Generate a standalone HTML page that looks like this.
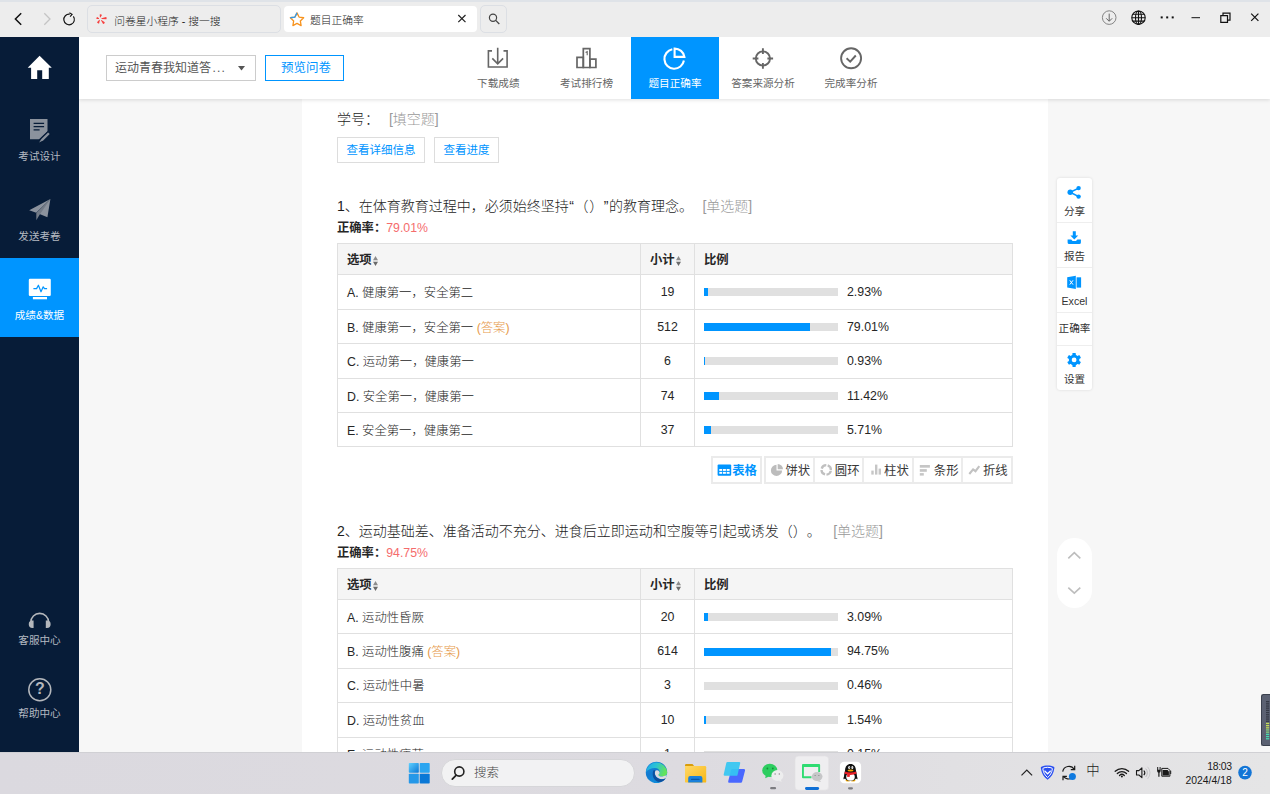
<!DOCTYPE html>
<html lang="zh-CN">
<head>
<meta charset="utf-8">
<title>题目正确率</title>
<style>
*{box-sizing:border-box;margin:0;padding:0}
html,body{width:1270px;height:794px;overflow:hidden;background:#f7f7f7}
body{position:relative;font-weight:300;text-spacing-trim:space-all;font-family:"Liberation Sans","Noto Sans CJK SC",sans-serif;font-size:12px;color:#262626}
.abs{position:absolute}
svg{display:block;overflow:visible}
/* ---------- browser chrome ---------- */
#chrome{position:absolute;left:0;top:0;width:1270px;height:37px;background:#ededed}
#chrome .topline{position:absolute;left:0;top:0;width:100%;height:2px;background:#dfe3e8}
.tab{position:absolute;top:5px;height:28px;border-radius:5px;font-size:10.75px;color:#222;line-height:30px;white-space:nowrap}
.tab1{left:87px;width:194px;border:1px solid #dcdfe4;background:#ededed}
.tab2{left:284px;top:6px;width:192.500px;height:26px;line-height:28.500px;background:#fff;border-radius:4px}
.tab3{left:480px;width:27px;border:1px solid #dcdfe4;background:#ededed}
/* ---------- sidebar ---------- */
#side{position:absolute;left:0;top:37px;width:79px;height:715px;background:#071c38}
#side .it{position:absolute;left:0;width:79px;text-align:center;font-size:10.6px;font-weight:400;color:#b4b9c1;white-space:nowrap}
#side .act{position:absolute;left:0;top:221px;width:79px;height:79px;background:#0095ff}
/* ---------- header ---------- */
#hdr{position:absolute;left:79px;top:37px;width:1191px;height:62px;background:#fff;box-shadow:0 1px 4px rgba(0,0,0,.13)}
.sel{position:absolute;left:27px;top:18px;width:150px;font-weight:400;height:26px;border:1px solid #ccc;background:#fff;font-size:12px;color:#555;line-height:24px;padding-left:8px;white-space:nowrap}
.pbtn{position:absolute;left:186px;top:18px;width:79px;font-weight:400;height:26px;border:1px solid #0095ff;background:#fff;font-size:12.5px;color:#0095ff;line-height:24px;text-align:center;padding-left:3px;white-space:nowrap}
.nav{position:absolute;top:0;width:88px;height:62px;text-align:center;font-size:10.6px;font-weight:400;color:#666;white-space:nowrap}
.nav.on{background:#0095ff;color:#fff}
.nav span{position:absolute;left:0;width:100%;top:38px;line-height:16px}
.nav svg{position:absolute;left:32px;top:9px}
/* ---------- main ---------- */
#panel{position:absolute;left:302px;top:99px;width:746px;height:653px;background:#fff}
.q{position:absolute;left:337px;font-size:14px;color:#1c1c1c;white-space:nowrap;line-height:20px}
.q i{font-style:normal;color:#999}
.rate{position:absolute;left:337px;font-size:12.3px;font-weight:bold;color:#262626;white-space:nowrap;line-height:16px}
.rate b{font-weight:300;color:#f56c6c}
.lbtn{position:absolute;top:137px;height:26px;font-weight:400;border:1px solid #ddd;background:#fff;color:#0095ff;font-size:11.5px;line-height:25.500px;text-align:center;white-space:nowrap}
table.t{position:absolute;left:337px;width:676px;border-collapse:collapse;font-size:12.35px;color:#262626;table-layout:fixed}
table.t td,table.t th{border:1px solid #e0e0e0;height:34.4px;padding:0 0 0 9px;text-align:left;white-space:nowrap;vertical-align:middle}
table.t th{background:#f5f5f5;height:31px;font-weight:bold}
table.t td.c{text-align:center;padding:0}
table.t tr.h35 td{height:35px}
table.t tr.h34 td{height:34px}
table.t em{font-style:normal;color:#e6994a}
.bar{display:inline-block;vertical-align:middle;width:134px;height:8px;background:#e0e0e0;position:relative;margin-right:9px;top:-0.300px}
.bar u{position:absolute;left:0;top:0;height:8px;background:#0095ff;display:block}
.sort{display:inline-block;width:5px;height:10px;margin-left:1px;vertical-align:-1.5px}
/* chart type buttons */
.ctg{position:absolute;top:456px;height:28px;border:2px solid #ebebeb;background:#fff}
.ct{position:absolute;top:0;height:24px;font-size:12.35px;color:#383838;font-weight:400;line-height:26px;white-space:nowrap}
.ct.on{color:#0095ff;font-weight:bold}
.ctsep{position:absolute;top:0;width:1.500px;height:24px;background:#ececec}
/* right tools */
#tools{position:absolute;left:1057px;top:178px;width:35px;height:212px;background:#fff;border-radius:3px;box-shadow:0 0 3px rgba(0,0,0,.12)}
#tools .tl{position:absolute;left:0;width:35px;text-align:center;font-size:10.6px;font-weight:400;color:#333;white-space:nowrap;line-height:14px}
#tools .ln{position:absolute;left:0;width:35px;height:1px;background:#eee}
#updn{position:absolute;left:1057px;top:538px;width:35px;height:70px;border-radius:18px;background:#fff}
/* ---------- taskbar ---------- */
#task{position:absolute;left:0;top:752px;width:1270px;height:42px;background:linear-gradient(90deg,#dbd9df 0%,#dddbe0 55%,#e1e0e3 75%,#e5e5e6 100%);border-top:1px solid #d0d0d4}
#task .search{position:absolute;left:441px;top:6px;width:194px;height:28px;border-radius:14px;background:#f2f2f3;border:1px solid #d6d6d9;font-size:12.5px;color:#444;line-height:26px;padding-left:32px}
#task .time{position:absolute;right:38.300px;top:6.600px;font-size:10.400px;line-height:14.300px;text-align:right;color:#1a1a1a}
</style>
</head>
<body>

<!-- MAIN PANEL -->
<div id="panel"></div>

<div class="q" style="top:109px">学号： <i style="margin-left:6px">[填空题]</i></div>
<div class="lbtn" style="left:337px;width:88px">查看详细信息</div>
<div class="lbtn" style="left:434px;width:65px">查看进度</div>

<div class="q" style="top:195.500px">1、在体育教育过程中，必须始终坚持<span style="letter-spacing:.600px;margin-left:.500px">“（）”</span>的教育理念。 <i style="margin-left:5.500px">[单选题]</i></div>
<div class="rate" style="top:220px">正确率：<b>79.01%</b></div>
<table class="t" style="top:243px">
<colgroup><col style="width:303px"><col style="width:54px"><col></colgroup>
<tr><th>选项<svg class="sort" viewBox="0 0 5 10"><path d="M0 4.200L2.500 0 5 4.200z" fill="#8c8c8c"/><path d="M0 5.800L2.500 10 5 5.800z" fill="#6a6a6a"/></svg></th><th>小计<svg class="sort" viewBox="0 0 5 10"><path d="M0 4.200L2.500 0 5 4.200z" fill="#8c8c8c"/><path d="M0 5.800L2.500 10 5 5.800z" fill="#6a6a6a"/></svg></th><th>比例</th></tr>
<tr class="h35"><td>A. 健康第一，安全第二</td><td class="c">19</td><td><span class="bar"><u style="width:4px"></u></span>2.93%</td></tr>
<tr class="h34"><td>B. 健康第一，安全第一 <em>(答案)</em></td><td class="c">512</td><td><span class="bar"><u style="width:106px"></u></span>79.01%</td></tr>
<tr class="h35"><td>C. 运动第一，健康第一</td><td class="c">6</td><td><span class="bar"><u style="width:1px"></u></span>0.93%</td></tr>
<tr class="h34"><td>D. 安全第一，健康第一</td><td class="c">74</td><td><span class="bar"><u style="width:15px"></u></span>11.42%</td></tr>
<tr class="h34"><td>E. 安全第一，健康第二</td><td class="c">37</td><td><span class="bar"><u style="width:7px"></u></span>5.71%</td></tr>
</table>

<div class="ctg" style="left:711px;width:51px"><div class="ct on" style="left:19.200px">表格</div></div>
<div class="ctg" style="left:764px;width:249px">
  <div class="ct" style="left:19.400px">饼状</div>
  <div class="ct" style="left:68.800px">圆环</div>
  <div class="ct" style="left:118.100px">柱状</div>
  <div class="ct" style="left:167.800px">条形</div>
  <div class="ct" style="left:217px">折线</div>
  <div class="ctsep" style="left:47.300px"></div><div class="ctsep" style="left:96.300px"></div><div class="ctsep" style="left:146.100px"></div><div class="ctsep" style="left:195.300px"></div>
</div>
<svg class="abs" style="left:705px;top:450px" width="320" height="40" viewBox="705 450 320 40" fill="none">
  <!-- table icon -->
  <rect x="717.600" y="464.500" width="13.600" height="11.300" rx="1" fill="#0095ff"/>
  <g fill="#fff"><rect x="719.300" y="469" width="2.900" height="1.900"/><rect x="723" y="469" width="2.900" height="1.900"/><rect x="726.700" y="469" width="2.900" height="1.900"/><rect x="719.300" y="471.900" width="2.900" height="1.900"/><rect x="723" y="471.900" width="2.900" height="1.900"/><rect x="726.700" y="471.900" width="2.900" height="1.900"/></g>
  <!-- pie -->
  <path d="M776.500 464.800A5.600 5.600 0 1 0 782.100 470.400H776.500z" fill="#bcbcbc"/>
  <path d="M777.700 463.900A5.300 5.300 0 0 1 783 469.200H777.700z" fill="#bcbcbc"/>
  <!-- ring -->
  <circle cx="826.200" cy="469.900" r="4.700" stroke="#c0c0c0" stroke-width="2.300" stroke-dasharray="5.900 1.480" transform="rotate(12 826.200 469.900)"/>
  <!-- bars -->
  <rect x="871.300" y="470.600" width="2.400" height="4" fill="#c6c6c6"/><rect x="875" y="464.600" width="2.400" height="10" fill="#c6c6c6"/><rect x="878.600" y="468.600" width="2.400" height="6" fill="#c6c6c6"/>
  <!-- hbars -->
  <rect x="919.800" y="465" width="10.100" height="2.700" fill="#c6c6c6"/><rect x="919.800" y="469.100" width="7" height="2.700" fill="#c6c6c6"/><rect x="919.800" y="473.100" width="4" height="2.500" fill="#c6c6c6"/>
  <!-- line -->
  <path d="M969.300 474l3.800-4.600 2.400 1.800 3.800-5" stroke="#c2c2c2" stroke-width="2.100"/>
</svg>

<div class="q" style="top:520.500px">2、运动基础差、准备活动不充分、进食后立即运动和空腹等引起或诱发（）。 <i style="margin-left:8.500px">[单选题]</i></div>
<div class="rate" style="top:545px">正确率：<b>94.75%</b></div>
<table class="t" style="top:568px">
<colgroup><col style="width:303px"><col style="width:54px"><col></colgroup>
<tr><th>选项<svg class="sort" viewBox="0 0 5 10"><path d="M0 4.200L2.500 0 5 4.200z" fill="#8c8c8c"/><path d="M0 5.800L2.500 10 5 5.800z" fill="#6a6a6a"/></svg></th><th>小计<svg class="sort" viewBox="0 0 5 10"><path d="M0 4.200L2.500 0 5 4.200z" fill="#8c8c8c"/><path d="M0 5.800L2.500 10 5 5.800z" fill="#6a6a6a"/></svg></th><th>比例</th></tr>
<tr><td>A. 运动性昏厥</td><td class="c">20</td><td><span class="bar"><u style="width:4px"></u></span>3.09%</td></tr>
<tr><td>B. 运动性腹痛 <em>(答案)</em></td><td class="c">614</td><td><span class="bar"><u style="width:127px"></u></span>94.75%</td></tr>
<tr><td>C. 运动性中暑</td><td class="c">3</td><td><span class="bar"><u style="width:0px"></u></span>0.46%</td></tr>
<tr><td>D. 运动性贫血</td><td class="c">10</td><td><span class="bar"><u style="width:2px"></u></span>1.54%</td></tr>
<tr><td>E. 运动性疲劳</td><td class="c">1</td><td><span class="bar"><u style="width:0px"></u></span>0.15%</td></tr>
</table>

<!-- RIGHT TOOLS -->
<div id="tools">
  <div class="ln" style="top:44px"></div><div class="ln" style="top:89px"></div><div class="ln" style="top:134px"></div><div class="ln" style="top:167px"></div>
  <div class="tl" style="top:26px">分享</div>
  <div class="tl" style="top:71px">报告</div>
  <div class="tl" style="top:116px">Excel</div>
  <div class="tl" style="top:143px">正确率</div>
  <div class="tl" style="top:194px">设置</div>
  <svg class="abs" style="left:0;top:0" width="35" height="212" viewBox="1057 178 35 212" fill="none">
    <!-- share -->
    <path d="M1078.700 188.100L1070.200 192.200l8.500 4.400" stroke="#0095ff" stroke-width="1.600"/>
    <circle cx="1070.200" cy="192.200" r="2.700" fill="#0095ff"/><circle cx="1078.600" cy="188.100" r="2.200" fill="#0095ff"/><circle cx="1078.600" cy="196.600" r="2.200" fill="#0095ff"/>
    <!-- download -->
    <path d="M1072.800 231.200h3v4.400h2.400l-3.900 3.900-3.900-3.900h2.400z" fill="#0095ff"/>
    <path d="M1067.600 239.600h3.600l1.400 1.500h3.400l1.400-1.500h3.500v2.800a1.600 1.600 0 0 1-1.600 1.600h-10.100a1.600 1.600 0 0 1-1.600-1.600z" fill="#0095ff"/>
    <!-- excel -->
    <path d="M1067.200 277.300l8.600-1.500v13.300l-8.600-1.500z" fill="#0095ff"/>
    <rect x="1076.600" y="277.300" width="4.500" height="10.300" fill="#0095ff"/>
    <path d="M1069.800 280.300l3.200 4.300M1073 280.300l-3.200 4.300" stroke="#fff" stroke-width="1"/>
    <!-- gear -->
    <g transform="translate(1074.100 359.900)">
      <g fill="#0095ff"><rect x="-1.700" y="-7" width="3.400" height="14" rx=".6"/><rect x="-1.700" y="-7" width="3.400" height="14" rx=".6" transform="rotate(60)"/><rect x="-1.700" y="-7" width="3.400" height="14" rx=".6" transform="rotate(120)"/><circle r="5.300"/></g>
      <circle r="2.400" fill="#fff"/>
    </g>
  </svg>
</div>
<div id="updn">
  <svg class="abs" style="left:0;top:0" width="35" height="70" viewBox="1057 538 35 70" fill="none">
    <path d="M1068.300 558.300l6-5.600 6 5.600" stroke="#bdbdbd" stroke-width="1.600"/>
    <path d="M1068.300 587.600l6 5.600 6-5.600" stroke="#bdbdbd" stroke-width="1.600"/>
  </svg>
</div>
<div class="abs" style="left:1261px;top:694px;width:9px;height:52px;background:#5b6172;border:1px solid #3b414e;border-right:none;border-radius:2.500px 0 0 2.500px">
  <svg width="8" height="50" viewBox="0 0 8 50"><rect x="4" y="6.0" width="3.200" height="1.300" fill="#353a46"/><rect x="4" y="8.2" width="3.200" height="1.300" fill="#353a46"/><rect x="4" y="10.4" width="3.200" height="1.300" fill="#353a46"/><rect x="4" y="12.5" width="3.200" height="1.300" fill="#353a46"/><rect x="4" y="14.7" width="3.200" height="1.300" fill="#353a46"/><rect x="4" y="16.9" width="3.200" height="1.300" fill="#353a46"/><rect x="4" y="19.1" width="3.200" height="1.300" fill="#353a46"/><rect x="4" y="21.3" width="3.200" height="1.300" fill="#353a46"/><rect x="4" y="23.4" width="3.200" height="1.300" fill="#353a46"/><rect x="4" y="25.6" width="3.200" height="1.300" fill="#353a46"/><rect x="4" y="27.8" width="3.200" height="1.300" fill="#c3dc55"/><rect x="4" y="30.0" width="3.200" height="1.300" fill="#c3dc55"/><rect x="4" y="32.2" width="3.200" height="1.300" fill="#c3dc55"/><rect x="4" y="34.3" width="3.200" height="1.300" fill="#86d37e"/><rect x="4" y="36.5" width="3.200" height="1.300" fill="#86d37e"/><rect x="4" y="38.7" width="3.200" height="1.300" fill="#45dcb0"/><rect x="4" y="40.9" width="3.200" height="1.300" fill="#45dcb0"/><rect x="4" y="43.1" width="3.200" height="1.300" fill="#45dcb0"/></svg>
</div>

<!-- HEADER -->
<div id="hdr">
  <div class="sel">运动青春我知道答<span style="letter-spacing:1.100px;margin-left:1.500px">...</span><svg class="abs" style="left:130.500px;top:10px" width="7" height="4.500" viewBox="0 0 7 4.500"><path d="M0 0h7L3.500 4.500z" fill="#555"/></svg></div>
  <div class="pbtn">预览问卷</div>
  <div class="nav" style="left:375.3px"><span>下载成绩</span></div>
  <div class="nav" style="left:463.5px"><span>考试排行榜</span></div>
  <div class="nav on" style="left:552px"><span>题目正确率</span></div>
  <div class="nav" style="left:640px"><span>答案来源分析</span></div>
  <div class="nav" style="left:728px"><span>完成率分析</span></div>
  <svg class="abs" style="left:-79px;top:-37px" width="1270" height="99" viewBox="0 0 1270 99" fill="none">
    <!-- download -->
    <g stroke="#666" stroke-width="1.600">
      <path d="M492 50.900h-3.600v16.100h18.700v-16.100h-3.600"/>
      <path d="M497.700 47.800v15.800M492.300 58.400l5.400 5.400 5.400-5.400"/>
    </g>
    <!-- podium -->
    <g stroke="#666" stroke-width="1.700">
      <path d="M577 57.400h6.300v10.100h-6.300z"/><path d="M583.300 48.700h6.600v18.800h-6.600z"/><path d="M589.900 59.200h6v8.300h-6z"/>
      <path d="M585.600 52.600l1.600-.900v3.600" stroke-width="1.100"/>
    </g>
    <!-- pie -->
    <g stroke="#fff" stroke-width="2.100">
      <path d="M672.300 49.300A9.800 9.800 0 1 0 683.900 60.500"/>
      <path d="M674.600 48.600v8.300h9.800A9.800 9.800 0 0 0 674.600 48.600z" stroke-linejoin="miter"/>
    </g>
    <!-- crosshair -->
    <g stroke="#666" stroke-width="1.900">
      <circle cx="762.900" cy="58.500" r="7.100"/>
      <path d="M762.900 48.300v5.700M762.900 63v5.700M752.700 58.500h5.700M767.400 58.500h5.700"/>
    </g>
    <!-- check circle -->
    <g stroke="#666" stroke-width="1.900">
      <circle cx="851.100" cy="58.300" r="10"/>
      <path d="M846.600 58.300l3.600 3.300 5.600-6.100"/>
    </g>
  </svg>
</div>

<!-- SIDEBAR -->
<div id="side">
  <div class="act"></div>
  <div class="it" style="top:111px">考试设计</div>
  <div class="it" style="top:190.500px">发送考卷</div>
  <div class="it" style="top:270px;color:#fff">成绩&amp;数据</div>
  <div class="it" style="top:595px">客服中心</div>
  <div class="it" style="top:668px">帮助中心</div>
  <svg class="abs" style="left:0;top:-37px" width="79" height="752" viewBox="0 0 79 752" fill="none">
    <!-- home -->
    <path d="M39.600 55.800L51.800 67.800H48.800V79H42.200V70.200H37.200V79H31.100V67.800H27.700z" fill="#fff"/>
    <!-- doc + pencil -->
    <path d="M30 118.900h17.500v12.300l-8.400 8.100h-9.100z" fill="#8b929d"/>
    <path d="M33.600 123.300h10.500M33.600 126.600h10.500M33.600 129.900h6" stroke="#071c38" stroke-width="1.300"/>
    <path d="M49.600 132.600L40 142" stroke="#071c38" stroke-width="4.600"/>
    <path d="M48.900 133.300L41.900 140.100" stroke="#8b929d" stroke-width="2.300"/>
    <path d="M41.300 138.900l1.700 1.700-3.900 1.900z" fill="#8b929d"/>
    <!-- paper plane -->
    <path d="M50.400 199.100L29.200 210.200l7 2.600z" fill="#8b929d"/>
    <path d="M50.400 199.100L37.700 213.300l9.700 4z" fill="#8b929d"/>
    <path d="M50.400 199.100L36.300 213v7.300l3.300-5.600z" fill="#737b87"/>
    <!-- monitor -->
    <rect x="28.800" y="278.800" width="22" height="17.100" rx="1.200" fill="#fff"/>
    <rect x="32.900" y="297" width="14.100" height="2.300" fill="#fff"/>
    <path d="M33.400 288.600h3.200l1.800-3.400 2.600 6.600 2.200-5 1.300 1.800h2.600" stroke="#0095ff" stroke-width="1.200" stroke-linejoin="round"/>
    <!-- headphones -->
    <path d="M30.800 624.500v-2.200a8.900 8.900 0 0 1 17.800 0v2.200" stroke="#b4b7bc" stroke-width="1.600"/>
    <path d="M33.600 620.600v7.300h-1.200a3.600 3.600 0 0 1 0-7.300zM45.800 620.600v7.300h1.200a3.600 3.600 0 0 0 0-7.300z" fill="#b4b7bc"/>
    <!-- help -->
    <circle cx="39.800" cy="689.700" r="11" stroke="#b4b7bc" stroke-width="1.500"/>
  </svg>
  <div class="abs" style="left:0;top:642px;width:79.600px;text-align:center;font-size:16px;font-weight:bold;color:#b4b7bc;line-height:20px">?</div>
</div>

<!-- BROWSER CHROME -->
<div id="chrome">
  <div class="topline"></div>
  <svg class="abs" style="left:0;top:0" width="1270" height="37" viewBox="0 0 1270 37" fill="none">
    <path d="M21.2 13.3L15.4 19l5.8 5.8" stroke="#111" stroke-width="1.5"/>
    <path d="M44.3 13.3L50 19l-5.7 5.8" stroke="#c4c4c4" stroke-width="1.3"/>
    <path d="M71.200 14.600A5.300 5.300 0 1 1 67 14.600" stroke="#111" stroke-width="1.150" transform="rotate(30 69.100 19.500)"/>
    <path d="M69.400 12.700l2.700 1.700-2 2.200" stroke="#111" stroke-width="1.100" fill="none"/>
  </svg>
  <div class="tab tab1"><span style="margin-left:26.200px">问卷星小程序 - 搜一搜</span></div>
  <div class="tab tab2"><span style="margin-left:26px">题目正确率</span></div>
  <div class="tab tab3"></div>
  <svg class="abs" style="left:0;top:0" width="1270" height="37" viewBox="0 0 1270 37" fill="none">
    <!-- red pinwheel favicon -->
    <path d="M99.70 14.52Q101.07 13.71 101.94 15.04L100.49 17.47L99.91 17.33ZM106.10 17.03Q107.30 18.07 106.31 19.32L101.53 18.90L101.47 18.30ZM104.81 22.33Q104.70 23.92 103.11 23.89L100.98 20.30L101.42 19.90ZM99.09 23.40Q97.57 23.87 97.03 22.37L99.33 19.67L99.87 19.93ZM96.57 19.12Q95.81 17.72 97.18 16.90L99.08 18.31L98.92 18.89Z" fill="#f6403f"/>
    <!-- wjx star favicon -->
    <path d="M297.00 12.90L299.06 17.07L303.66 17.74L300.33 20.98L301.11 25.56L297.00 23.40L292.89 25.56L293.67 20.98L290.34 17.74L294.94 17.07Z" stroke="#f7931e" stroke-width="1.300" stroke-linejoin="round"/>
    <path d="M290.34 17.74L294.94 17.07L297.00 12.90" stroke="#2e9cf2" stroke-width="1.300" stroke-linejoin="round"/>
    <!-- tab close -->
    <path d="M458.300 15l7.200 7.200M465.500 15l-7.200 7.200" stroke="#222" stroke-width="1.200"/>
    <!-- search -->
    <circle cx="493" cy="17.700" r="3.600" stroke="#444" stroke-width="1.200"/><path d="M495.700 20.400l3.600 3.600" stroke="#444" stroke-width="1.300"/>
    <!-- download circle -->
    <circle cx="1109.200" cy="17.600" r="6.800" stroke="#777" stroke-width="0.900"/>
    <path d="M1109.200 13.600v7.400M1106.200 18.300l3 3 3-3" stroke="#666" stroke-width="1"/>
    <!-- globe -->
    <g stroke="#111" stroke-width="1.100"><circle cx="1138.500" cy="17.700" r="6.700"/><ellipse cx="1138.500" cy="17.700" rx="3" ry="6.700"/><path d="M1131.800 17.700h13.400M1132.800 14.300h11.400M1132.800 21.100h11.400M1138.500 11v13.400"/></g>
    <!-- dots -->
    <g fill="#111"><rect x="1160.700" y="16.400" width="2" height="2"/><rect x="1166.200" y="16.400" width="2" height="2"/><rect x="1171.700" y="16.400" width="2" height="2"/></g>
    <!-- min / restore / close -->
    <path d="M1191.500 17.700h8.500" stroke="#111" stroke-width="1"/>
    <path d="M1220.800 15.600h6.700v6.700h-6.700z" stroke="#111" stroke-width="1.200" fill="#ededed"/>
    <path d="M1223 15.400v-2.300h7v7h-2.300" stroke="#111" stroke-width="1.200"/>
    <path d="M1251.200 13.700l7.200 7.200M1258.400 13.700l-7.200 7.200" stroke="#111" stroke-width="1.200"/>
  </svg>
</div>

<!-- TASKBAR -->
<div id="task">
  <div class="search">搜索</div>
  <div class="time"><span style="letter-spacing:-.300px">18:03</span><br>2024/4/18</div>
  <svg class="abs" style="left:0;top:-1px" width="1270" height="42" viewBox="0 752 1270 42" fill="none">
    <defs>
      <linearGradient id="wg" x1="0" y1="0" x2="1" y2="1"><stop offset="0" stop-color="#5fd0ff"/><stop offset="1" stop-color="#0a78d6"/></linearGradient>
      <linearGradient id="eg" x1="0" y1="0" x2="0.600" y2="1"><stop offset="0" stop-color="#1a8fe0"/><stop offset="0.500" stop-color="#127ad0"/><stop offset="1" stop-color="#0f8fdc"/></linearGradient>
      <linearGradient id="eg2" x1="0" y1="0" x2="1" y2="0.300"><stop offset="0" stop-color="#1ea8ea"/><stop offset="0.500" stop-color="#2cc3d4"/><stop offset="1" stop-color="#63e35c"/></linearGradient>
      <linearGradient id="fg" x1="0" y1="0" x2="1" y2="1"><stop offset="0" stop-color="#ffd866"/><stop offset="1" stop-color="#f8b714"/></linearGradient>
      <linearGradient id="cg" x1="0" y1="0" x2="1" y2="1"><stop offset="0" stop-color="#3fc3f7"/><stop offset="1" stop-color="#3d8bf2"/></linearGradient>
    </defs>
    <!-- windows logo -->
    <rect x="408.800" y="763" width="10" height="9.800" rx=".8" fill="url(#wg)"/><rect x="419.700" y="763" width="10" height="9.800" rx=".8" fill="#2ba5f0"/>
    <rect x="408.800" y="773.700" width="10" height="9.800" rx=".8" fill="#2698e8"/><rect x="419.700" y="773.700" width="10" height="9.800" rx=".8" fill="#0a78d6"/>
    <!-- search magnifier -->
    <circle cx="459.300" cy="771.500" r="4.600" stroke="#222" stroke-width="1.600"/><path d="M456 775.300l-3.700 3.800" stroke="#222" stroke-width="1.800" stroke-linecap="round"/>
    <!-- edge -->
    <circle cx="656.500" cy="772.400" r="10.700" fill="url(#eg)"/>
    <path d="M645.900 772A10.700 10.700 0 0 1 667.200 772.400C667.200 775 665 776.400 662.500 776.400C660 776.400 658.500 775.700 658.500 774.700C658.500 773.900 659.700 773.300 659.700 771.800C659.700 769.500 657.600 767.900 655 767.900C651 767.900 647.500 770 645.900 772Z" fill="url(#eg2)"/>
    <path d="M655.600 770.600A3 3 0 0 1 659.600 772.200C659.800 773.600 658.500 774 658.500 774.900C658.700 776 660.500 776.500 662.500 776.400C664.500 776.300 666.200 775.500 666.800 774.600C666.700 776.200 666.200 777.600 665.600 778.400C663.500 779.600 660.500 779.600 658.200 778.300C655.300 776.600 654 773.300 655.600 770.600Z" fill="#dcdbdf"/>
    <path d="M653.400 770.400C651.300 775.500 654 781.600 659.600 782C662.300 782 664.600 780.300 665.700 778.200C663.300 779.600 660.400 779.700 658 778.300C655 776.600 653.900 773.300 655.400 770.600C654.800 770.300 654 770.200 653.400 770.400Z" fill="#0c4f9e"/>
    <!-- folder -->
    <path d="M685 765.300a1.200 1.200 0 0 1 1.200-1.200h6.300l1.600 2h-9.100z" fill="#d99d0c"/>
    <path d="M685 766h20a1.200 1.200 0 0 1 1.200 1.200v14.200a1.200 1.200 0 0 1-1.200 1.200h-18.800a1.200 1.200 0 0 1-1.200-1.200z" fill="url(#fg)"/>
    <path d="M688.200 782.600v-4.500a2 2 0 0 1 2-2h10.200a2 2 0 0 1 2 2v4.500z" fill="#1a80da"/><rect x="691" y="778.700" width="8.600" height="1.300" rx=".6" fill="#0a58a8"/>
    <!-- blue app -->
    <path d="M732.300 768.900h11.600a1.200 1.200 0 0 1 1.150 1.550l-2.950 11.350a1.200 1.200 0 0 1-1.150.900h-11.600a1.200 1.200 0 0 1-1.150-1.550l2.950-11.350a1.200 1.200 0 0 1 1.150-.900z" fill="#4a68ff"/>
    <path d="M727.500 761.900h11.500a1.200 1.200 0 0 1 1.150 1.550l-2.600 11.450a1.200 1.200 0 0 1-1.150.900h-11.500a1.200 1.200 0 0 1-1.150-1.550l2.600-11.450a1.200 1.200 0 0 1 1.150-.900z" fill="#35c6f2" fill-opacity=".93"/>
    <!-- wechat -->
    <ellipse cx="769.800" cy="770.400" rx="7.600" ry="6.600" fill="#2dcd5f"/><path d="M765.800 775l-.600 3.200 3.800-1.800z" fill="#2dcd5f"/>
    <circle cx="767.400" cy="768.500" r=".900" fill="#15903a"/><circle cx="772.800" cy="768.500" r=".900" fill="#15903a"/>
    <ellipse cx="777.400" cy="775.500" rx="6" ry="5.400" fill="#ededee"/><path d="M780.600 779.600l1.300 2.200-3.400-.900z" fill="#ededee"/>
    <circle cx="775.100" cy="773.900" r=".750" fill="#8e8e90"/><circle cx="779.300" cy="773.900" r=".750" fill="#8e8e90"/>
    <rect x="770.100" y="787.100" width="6" height="2.200" rx="1.100" fill="#7c7c80"/>
    <!-- active app -->
    <rect x="795" y="755.900" width="33.700" height="34.300" rx="3.800" fill="#efeef0" stroke="#e2e1e4" stroke-width=".700"/>
    <path d="M803 764h16.100a1 1 0 0 1 1 1v7h-1.900v-4.900h-14.300v9.200h7.600v1.900h-8.500a1 1 0 0 1-1-1v-12.200a1 1 0 0 1 1-1z" fill="#2fdc72"/>
    <ellipse cx="817.100" cy="776.600" rx="5.400" ry="4.500" fill="#c6c6c8"/><path d="M819.600 780.200l1.500 1.900-3.600-.800z" fill="#c6c6c8"/>
    <rect x="814.300" y="775" width="1.800" height=".900" rx=".400" fill="#9a9a9c"/><rect x="817.900" y="775" width="1.800" height=".900" rx=".400" fill="#9a9a9c"/>
    <rect x="805" y="787" width="14.100" height="2.900" rx="1.450" fill="#0f6fd6"/>
    <!-- QQ -->
    <rect x="839.900" y="761.800" width="21.200" height="21.400" rx="4.200" fill="#fff"/>
    <path d="M845.600 774c-1.300 1.500-2.300 3.600-2.100 5 .2.700.9.200 1.700-.900zM855.400 774c1.300 1.500 2.300 3.600 2.100 5-.2.700-.9.200-1.700-.900z" fill="#111"/>
    <ellipse cx="848" cy="780.600" rx="2.500" ry="1" fill="#f5a800"/><ellipse cx="853" cy="780.600" rx="2.500" ry="1" fill="#f5a800"/>
    <path d="M850.500 764c3.300 0 5.300 2.600 5.400 6 .1 1.800 1 3.400 1 6 0 3-2.600 4.900-6.400 4.900s-6.400-1.900-6.400-4.900c0-2.600.9-4.200 1-6 .1-3.400 2.100-6 5.400-6z" fill="#111"/>
    <ellipse cx="850.500" cy="777" rx="4.300" ry="3.700" fill="#fff"/>
    <path d="M844.900 771.500c3.400 1.300 7.800 1.300 11.200 0l.400 2.300c-3.600 1.500-8.400 1.500-12 0z" fill="#ea1f27"/>
    <path d="M847.300 773.900l-.300 2.800 2.600.300.500-2.700z" fill="#ea1f27"/>
    <ellipse cx="849.200" cy="767.500" rx="1" ry="1.500" fill="#fff"/><ellipse cx="852.300" cy="767.500" rx="1" ry="1.500" fill="#fff"/>
    <circle cx="849.500" cy="767.700" r=".450" fill="#111"/><circle cx="852" cy="767.700" r=".450" fill="#111"/>
    <ellipse cx="850.500" cy="770.400" rx="3" ry="1" fill="#f5a800"/>
    <rect x="848" y="787.200" width="5" height="2.200" rx="1.100" fill="#7c7c80"/>
    <!-- tray chevron -->
    <path d="M1021.500 775.300l5.300-5.300 5.300 5.300" stroke="#222" stroke-width="1.200"/>
    <!-- shield -->
    <path d="M1047.600 765.400c2.300 0 4.600.500 6.200 1.300.500.300.700.700.600 1.300-.700 5.400-3 9.200-6.800 11.800-3.800-2.600-6.100-6.400-6.800-11.800-.100-.600.100-1 .600-1.300 1.600-.800 3.900-1.300 6.200-1.300z" fill="#2a4ff0"/>
    <path d="M1047.600 767.300c1.700 0 3.300.300 4.500.900.200.100.300.300.300.600-.600 3.900-2.200 6.700-4.800 8.700-2.600-2-4.200-4.800-4.800-8.700 0-.300.100-.500.300-.600 1.200-.600 2.800-.900 4.500-.900z" stroke="#fff" stroke-width="1"/>
    <path d="M1044.500 770.800l3.100 3 3.100-3" stroke="#fff" stroke-width="1.200"/>
    <!-- sync -->
    <path d="M1062.700 771.600a6.300 6.300 0 0 1 11.600-2.200M1074.700 765.800v3.900h-3.900" stroke="#1a1a1a" stroke-width="1.200"/>
    <path d="M1072 778a6.300 6.300 0 0 1-8.500-1.600M1063 780.200v-3.900h3.900" stroke="#1a1a1a" stroke-width="1.200"/>
    <circle cx="1072.400" cy="776.400" r="3.500" fill="#0f7ae0"/>
    <!-- wifi -->
    <g stroke="#1a1a1a" stroke-width="1.300" stroke-linecap="round"><path d="M1115.200 771.300a9.600 9.600 0 0 1 13.400 0"/><path d="M1117.300 773.500a6.500 6.500 0 0 1 9.200 0"/><path d="M1119.500 775.500a3.400 3.400 0 0 1 4.800 0"/></g>
    <circle cx="1121.900" cy="776.600" r="1" fill="#1a1a1a"/>
    <!-- volume -->
    <path d="M1136.500 770.600h2.400l3-2.700v9.800l-3-2.700h-2.400z" stroke="#1a1a1a" stroke-width="1.100" stroke-linejoin="round"/>
    <path d="M1143.800 770.500a3.400 3.400 0 0 1 0 4.600" stroke="#1a1a1a" stroke-width="1.100"/><path d="M1145.700 768.600a6.200 6.200 0 0 1 0 8.400" stroke="#b4b4b8" stroke-width=".9"/><path d="M1147.600 766.800a8.800 8.800 0 0 1 0 12" stroke="#c6c6ca" stroke-width=".9"/>
    <!-- battery -->
    <path d="M1161.800 768.400h6.200l1.900 2v5.800h-8.100z" stroke="#1a1a1a" stroke-width="1" stroke-linejoin="round"/>
    <path d="M1162.600 770h5l1.300 1.400v4h-6.300z" fill="#1a1a1a"/>
    <path d="M1170.200 770.700h1v3.400h-1z" fill="#1a1a1a"/>
    <path d="M1157.700 767v3M1160.100 767v3" stroke="#1a1a1a" stroke-width="1"/>
    <path d="M1157.100 769.700h3.600v1.200a1.800 1.800 0 0 1-3.600 0z" fill="#1a1a1a"/>
    <path d="M1158.900 772v4.700" stroke="#1a1a1a" stroke-width="1.200"/>
    <!-- badge -->
    <circle cx="1245" cy="772.600" r="6.800" fill="#1275d6"/>
  </svg>
  <div class="abs" style="left:1086.300px;top:9.400px;font-size:13.400px;line-height:18px;color:#222;font-family:'Liberation Sans','Noto Sans CJK SC',sans-serif;font-weight:300">中</div>
  <div class="abs" style="left:1238.200px;top:14px;width:13.600px;text-align:center;font-size:10px;line-height:12px;color:#fff">2</div>
</div>

</body>
</html>
